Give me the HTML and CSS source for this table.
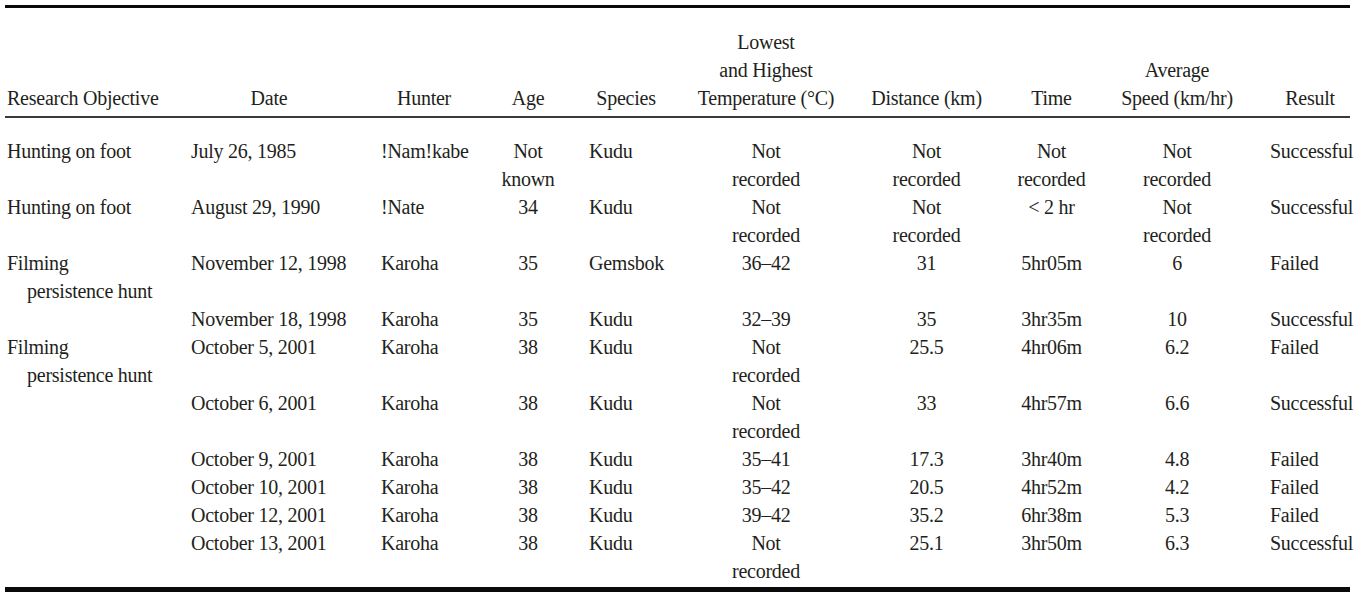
FILE: index.html
```html
<!DOCTYPE html>
<html lang="en">
<head>
<meta charset="utf-8">
<title>Persistence hunts</title>
<link rel="stylesheet" href="styles.css">
</head>
<body>
<table class="hunts">
  <thead>
    <tr>
      <th class="c1 left">Research Objective</th>
      <th class="c2">Date</th>
      <th class="c3">Hunter</th>
      <th class="c4">Age</th>
      <th class="c5">Species</th>
      <th class="c6">Lowest<br>and Highest<br>Temperature (°C)</th>
      <th class="c7">Distance (km)</th>
      <th class="c8">Time</th>
      <th class="c9">Average<br>Speed (km/hr)</th>
      <th class="c10">Result</th>
    </tr>
  </thead>
  <tbody>
    <tr class="first">
      <td class="obj">Hunting on foot</td>
      <td class="l">July 26, 1985</td>
      <td class="l">!Nam!kabe</td>
      <td class="m">Not<br>known</td>
      <td class="l">Kudu</td>
      <td class="m">Not<br>recorded</td>
      <td class="m">Not<br>recorded</td>
      <td class="m">Not<br>recorded</td>
      <td class="m">Not<br>recorded</td>
      <td class="res">Successful</td>
    </tr>
    <tr>
      <td class="obj">Hunting on foot</td>
      <td class="l">August 29, 1990</td>
      <td class="l">!Nate</td>
      <td class="m">34</td>
      <td class="l">Kudu</td>
      <td class="m">Not<br>recorded</td>
      <td class="m">Not<br>recorded</td>
      <td class="m">&lt; 2 hr</td>
      <td class="m">Not<br>recorded</td>
      <td class="res">Successful</td>
    </tr>
    <tr>
      <td class="obj">Filming<br><span class="hang">persistence hunt</span></td>
      <td class="l">November 12, 1998</td>
      <td class="l">Karoha</td>
      <td class="m">35</td>
      <td class="l">Gemsbok</td>
      <td class="m">36–42</td>
      <td class="m">31</td>
      <td class="m">5hr05m</td>
      <td class="m">6</td>
      <td class="res">Failed</td>
    </tr>
    <tr>
      <td class="obj"></td>
      <td class="l">November 18, 1998</td>
      <td class="l">Karoha</td>
      <td class="m">35</td>
      <td class="l">Kudu</td>
      <td class="m">32–39</td>
      <td class="m">35</td>
      <td class="m">3hr35m</td>
      <td class="m">10</td>
      <td class="res">Successful</td>
    </tr>
    <tr>
      <td class="obj">Filming<br><span class="hang">persistence hunt</span></td>
      <td class="l">October 5, 2001</td>
      <td class="l">Karoha</td>
      <td class="m">38</td>
      <td class="l">Kudu</td>
      <td class="m">Not<br>recorded</td>
      <td class="m">25.5</td>
      <td class="m">4hr06m</td>
      <td class="m">6.2</td>
      <td class="res">Failed</td>
    </tr>
    <tr>
      <td class="obj"></td>
      <td class="l">October 6, 2001</td>
      <td class="l">Karoha</td>
      <td class="m">38</td>
      <td class="l">Kudu</td>
      <td class="m">Not<br>recorded</td>
      <td class="m">33</td>
      <td class="m">4hr57m</td>
      <td class="m">6.6</td>
      <td class="res">Successful</td>
    </tr>
    <tr>
      <td class="obj"></td>
      <td class="l">October 9, 2001</td>
      <td class="l">Karoha</td>
      <td class="m">38</td>
      <td class="l">Kudu</td>
      <td class="m">35–41</td>
      <td class="m">17.3</td>
      <td class="m">3hr40m</td>
      <td class="m">4.8</td>
      <td class="res">Failed</td>
    </tr>
    <tr>
      <td class="obj"></td>
      <td class="l">October 10, 2001</td>
      <td class="l">Karoha</td>
      <td class="m">38</td>
      <td class="l">Kudu</td>
      <td class="m">35–42</td>
      <td class="m">20.5</td>
      <td class="m">4hr52m</td>
      <td class="m">4.2</td>
      <td class="res">Failed</td>
    </tr>
    <tr>
      <td class="obj"></td>
      <td class="l">October 12, 2001</td>
      <td class="l">Karoha</td>
      <td class="m">38</td>
      <td class="l">Kudu</td>
      <td class="m">39–42</td>
      <td class="m">35.2</td>
      <td class="m">6hr38m</td>
      <td class="m">5.3</td>
      <td class="res">Failed</td>
    </tr>
    <tr class="last">
      <td class="obj"></td>
      <td class="l">October 13, 2001</td>
      <td class="l">Karoha</td>
      <td class="m">38</td>
      <td class="l">Kudu</td>
      <td class="m">Not<br>recorded</td>
      <td class="m">25.1</td>
      <td class="m">3hr50m</td>
      <td class="m">6.3</td>
      <td class="res">Successful</td>
    </tr>
  </tbody>
</table>
</body>
</html>
```
FILE: styles.css
```css
html, body {
  margin: 0;
  background: #ffffff;
}

body {
  padding: 5px 0 0 5px;
  font-family: "Liberation Serif", "Times New Roman", serif;
  font-size: 20px;
  letter-spacing: -0.25px;
  color: #231f20;
}

.hunts {
  width: 1345px;
  table-layout: fixed;
  border-collapse: separate;
  border-spacing: 0;
  border-top: 3px solid #0a0a0a;
  border-bottom: 5px solid #0a0a0a;
}

.hunts th,
.hunts td {
  box-sizing: border-box;
  line-height: 28px;
  white-space: nowrap;
  font-weight: normal;
}

.hunts th {
  vertical-align: bottom;
  text-align: center;
  padding: 20px 17px 4px;
  border-bottom: 2px solid #3a3a3a;
}

.hunts th.left { text-align: left; padding-left: 2px; padding-right: 0; }
.hunts th.c4, .hunts th.c6, .hunts th.c7, .hunts th.c8, .hunts th.c9 {
  padding-left: 4px;
  padding-right: 4px;
}
.hunts th.c10 { padding-left: 18px; padding-right: 0; }

.c1 { width: 169px; }
.c2 { width: 190px; }
.c3 { width: 120px; }
.c4 { width: 88px; }
.c5 { width: 108px; }
.c6 { width: 172px; }
.c7 { width: 149px; }
.c8 { width: 101px; }
.c9 { width: 150px; }
.c10 { width: 98px; }

.hunts td {
  vertical-align: top;
  padding: 0;
}

.hunts td.obj { padding-left: 2px; text-align: left; }
.hunts td.l { padding-left: 17px; text-align: left; }
.hunts td.m { padding: 0 4px; text-align: center; }
.hunts td.res { padding-left: 18px; text-align: left; }

.hang { padding-left: 20px; }

.hunts tr.first td { padding-top: 19px; }
.hunts tr.last td { padding-bottom: 2px; }
```
